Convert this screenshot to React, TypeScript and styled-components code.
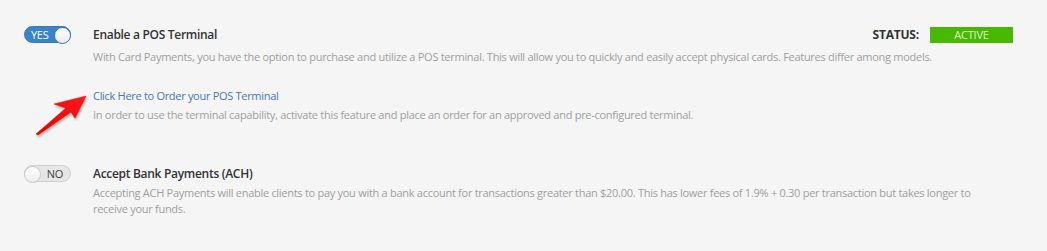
import React from 'react';
import styled, { createGlobalStyle } from 'styled-components';

const GlobalStyle = createGlobalStyle`
  html, body {
    margin: 0;
    background: #f5f5f5;
  }
  body {
    font-family: 'Open Sans', 'Liberation Sans', sans-serif;
  }
`;

const Page = styled.div`
  position: relative;
  width: 1047px;
  height: 251px;
  padding: 26px 34px 0 24px;
  box-sizing: border-box;
  background: #f5f5f5;
`;

const Setting = styled.div`
  display: grid;
  grid-template-columns: 69px 1fr;
  margin-bottom: 42px;
`;

const Toggle = styled.div<{ $on: boolean }>`
  position: relative;
  width: 47px;
  height: 17px;
  box-sizing: border-box;
  border-radius: 9px;
  display: flex;
  align-items: center;
  justify-content: ${(p) => (p.$on ? 'flex-start' : 'flex-end')};
  padding: ${(p) => (p.$on ? '0 0 0 6px' : '0 7px 0 0')};
  background: ${(p) => (p.$on ? '#3a83c9' : '#e6e6e6')};
  border: 1px solid ${(p) => (p.$on ? '#3579bb' : '#cfcfcf')};
  color: ${(p) => (p.$on ? '#fff' : '#444')};
  font-size: 11px;
  letter-spacing: -0.3px;
  line-height: 1;
`;

const Knob = styled.span<{ $on: boolean }>`
  position: absolute;
  top: 0;
  ${(p) => (p.$on ? 'right: -1px;' : 'left: -1px;')}
  width: 15px;
  height: 15px;
  border-radius: 50%;
  background: linear-gradient(#fff, #ececec);
  border: 1px solid ${(p) => (p.$on ? '#3579bb' : '#c9c9c9')};
`;

const Body = styled.div`
  display: flex;
  flex-direction: column;
`;

const TitleRow = styled.div`
  display: flex;
  justify-content: space-between;
  align-items: center;
  height: 17px;
`;

const Title = styled.div`
  font-size: 12px;
  font-weight: 600;
  letter-spacing: -0.3px;
  color: #333;
`;

const Status = styled.div`
  display: flex;
  align-items: center;
  gap: 11px;
`;

const StatusLabel = styled.span`
  font-size: 12px;
  font-weight: 700;
  letter-spacing: -0.2px;
  color: #333;
`;

const Badge = styled.span`
  width: 83px;
  height: 16px;
  background: #46b900;
  color: #dff5d2;
  font-size: 11px;
  letter-spacing: -0.2px;
  text-align: center;
  line-height: 16px;
`;

const Desc = styled.p<{ $gap?: number }>`
  max-width: 890px;
  margin: ${(p) => p.$gap ?? 6}px 0 0;
  font-size: 11px;
  letter-spacing: -0.28px;
  line-height: 16px;
  color: #a0a0a0;
`;

const SubBlock = styled.div`
  margin-top: 23px;
`;

const Link = styled.a`
  display: block;
  font-size: 11px;
  letter-spacing: -0.3px;
  color: #4577b8;
  text-decoration: none;
  line-height: 16px;
`;

const Arrow = styled.svg`
  position: absolute;
  left: 34px;
  top: 93px;
`;

const App: React.FC = () => (
  <>
    <GlobalStyle />
    <Page>
      <Setting>
        <Toggle $on>
          YES
          <Knob $on />
        </Toggle>
        <Body>
          <TitleRow>
            <Title>Enable a POS Terminal</Title>
            <Status>
              <StatusLabel>STATUS:</StatusLabel>
              <Badge>ACTIVE</Badge>
            </Status>
          </TitleRow>
          <Desc>
            With Card Payments, you have the option to purchase and utilize a POS terminal. This will
            allow you to quickly and easily accept physical cards. Features differ among models.
          </Desc>
          <SubBlock>
            <Link href="#">Click Here to Order your POS Terminal</Link>
            <Desc $gap={3}>
              In order to use the terminal capability, activate this feature and place an order for an
              approved and pre-configured terminal.
            </Desc>
          </SubBlock>
        </Body>
      </Setting>
      <Setting>
        <Toggle $on={false}>
          NO
          <Knob $on={false} />
        </Toggle>
        <Body>
          <TitleRow>
            <Title>Accept Bank Payments (ACH)</Title>
          </TitleRow>
          <Desc $gap={3}>
            Accepting ACH Payments will enable clients to pay you with a bank account for transactions
            greater than $20.00. This has lower fees of 1.9% + 0.30 per transaction but takes longer to
            receive your funds.
          </Desc>
        </Body>
      </Setting>
      <Arrow width="56" height="46" viewBox="0 0 56 46">
        <defs>
          <linearGradient id="ag" x1="0" y1="1" x2="1" y2="0">
            <stop offset="0" stopColor="#e00000" />
            <stop offset="1" stopColor="#ff1a1a" />
          </linearGradient>
        </defs>
        <path
          d="M52 3 L41 25 L37 19 L4 42 L2 41 L32 15 L20 11 Z"
          fill="url(#ag)"
          stroke="#d00"
          strokeWidth="0.5"
          style={{ filter: 'drop-shadow(1px 2px 1px rgba(0,0,0,0.3))' }}
        />
      </Arrow>
    </Page>
  </>
);

export default App;
